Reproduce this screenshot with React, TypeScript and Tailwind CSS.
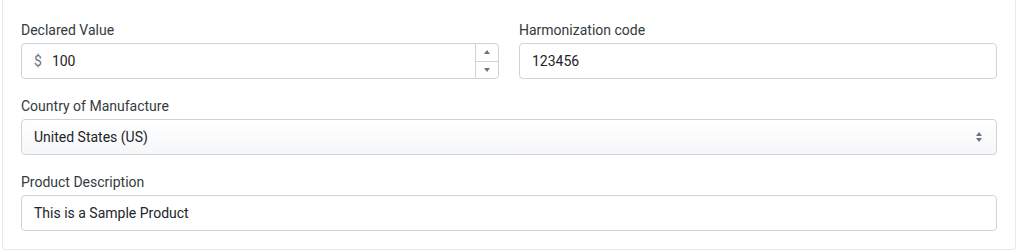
const labelCls = 'block h-5 text-sm leading-5 text-[#343a40]'
const boxCls = 'flex h-9 items-center rounded border border-[#ced4da] bg-white text-sm text-[#212529]'

function Field({ label, children }: { label: string; children: React.ReactNode }) {
  return (
    <div className="flex flex-col gap-[3px]">
      <span className={labelCls}>{label}</span>
      {children}
    </div>
  )
}

function Tri({ up }: { up?: boolean }) {
  return (
    <svg width="6" height="4" viewBox="0 0 6 4" className="text-[#6b7280]" fill="currentColor" aria-hidden="true">
      {up ? <path d="M0 4 3 0 6 4Z" /> : <path d="M0 0 3 4 6 0Z" />}
    </svg>
  )
}

export default function App() {
  return (
    <div className="h-[251px] bg-white pl-[2px] pr-px font-['Roboto',sans-serif]">
      <div className="h-[250px] rounded-b border-x border-b border-[#e7e9ee] px-[18px] pt-5">
        <div className="grid grid-cols-2 gap-x-5 gap-y-[17px]">
          <Field label="Declared Value">
            <div className={boxCls}>
              <span className="pl-3 text-[#6b7280]">$</span>
              <span className="flex-1 pl-[10px]">100</span>
              <div className="flex h-full w-[23px] flex-col border-l border-[#ced4da]">
                <div className="flex flex-1 items-center justify-center border-b border-[#ced4da]">
                  <Tri up />
                </div>
                <div className="flex flex-1 items-center justify-center">
                  <Tri />
                </div>
              </div>
            </div>
          </Field>
          <Field label="Harmonization code">
            <div className={boxCls}>
              <span className="pl-3">123456</span>
            </div>
          </Field>
          <div className="col-span-2">
            <Field label="Country of Manufacture">
              <div className={`${boxCls} justify-between bg-gradient-to-b from-white to-[#f6f7f9] pr-[14px]`}>
                <span className="pl-3">United States (US)</span>
                <div className="flex flex-col gap-[2px]">
                  <Tri up />
                  <Tri />
                </div>
              </div>
            </Field>
          </div>
          <div className="col-span-2">
            <Field label="Product Description">
              <div className={boxCls}>
                <span className="pl-3">This is a Sample Product</span>
              </div>
            </Field>
          </div>
        </div>
      </div>
    </div>
  )
}
